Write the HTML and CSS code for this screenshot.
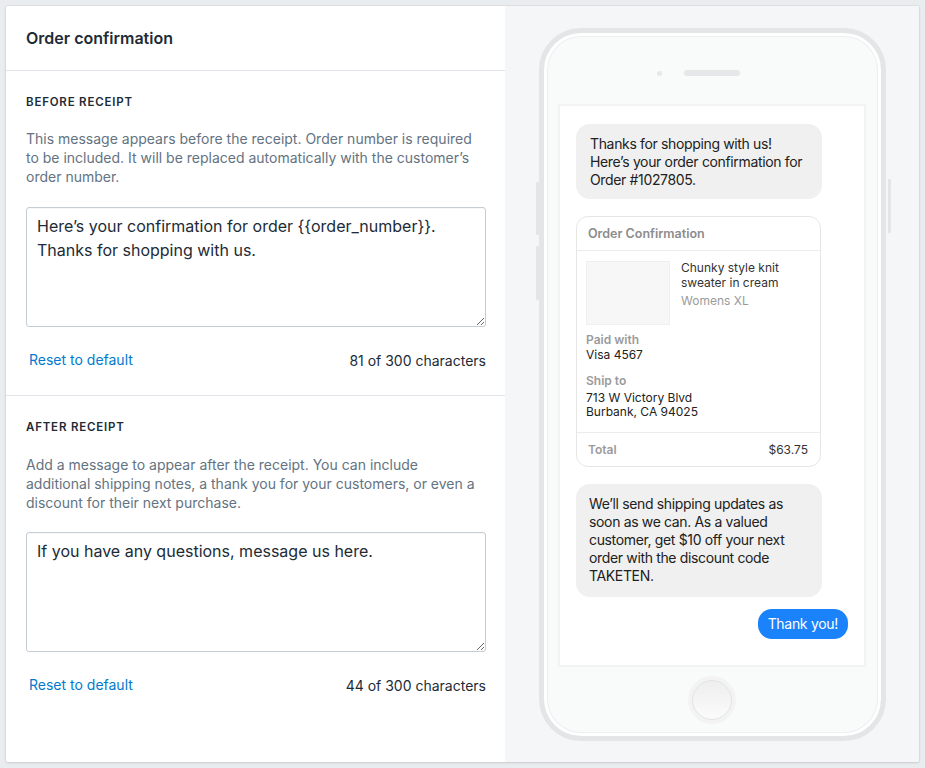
FILE: index.html
```html
<!DOCTYPE html>
<html lang="en">
<head>
<meta charset="utf-8">
<title>Order confirmation</title>
<link rel="stylesheet" href="styles.css">
</head>
<body>
<div class="card">
  <div class="editor">
    <div class="editor-header">
      <h1 class="title">Order confirmation</h1>
    </div>
    <section class="section">
      <h2 class="subheading">Before receipt</h2>
      <p class="help">This message appears before the receipt. Order number is required to be included. It will be replaced automatically with the customer’s order number.</p>
      <textarea class="field">Here’s your confirmation for order {{order_number}}. Thanks for shopping with us.</textarea>
      <div class="field-footer">
        <a class="link" href="#">Reset to default</a>
        <span class="count">81 of 300 characters</span>
      </div>
    </section>
    <section class="section section-border">
      <h2 class="subheading">After receipt</h2>
      <p class="help">Add a message to appear after the receipt. You can include additional shipping notes, a thank you for your customers, or even a discount for their next purchase.</p>
      <textarea class="field">If you have any questions, message us here.</textarea>
      <div class="field-footer">
        <a class="link" href="#">Reset to default</a>
        <span class="count">44 of 300 characters</span>
      </div>
    </section>
  </div>
  <div class="preview">
    <div class="phone">
      <span class="side side-l1"></span>
      <span class="side side-l2"></span>
      <span class="side side-r1"></span>
      <div class="phone-top">
        <span class="cam"></span>
        <span class="speaker"></span>
      </div>
      <div class="screen">
        <div class="bubble">Thanks for shopping with us!<br>Here’s your order confirmation for<br>Order #1027805.</div>
        <div class="receipt">
          <div class="receipt-head">Order Confirmation</div>
          <div class="receipt-body">
            <div class="item">
              <div class="thumb"></div>
              <div class="item-info">
                <div class="item-name">Chunky style knit<br>sweater in cream</div>
                <div class="item-variant">Womens XL</div>
              </div>
            </div>
            <div class="label label-first">Paid with</div>
            <div class="value">Visa 4567</div>
            <div class="label">Ship to</div>
            <div class="value value-addr">713 W Victory Blvd<br>Burbank, CA 94025</div>
          </div>
          <div class="receipt-foot">
            <span class="total-label">Total</span>
            <span class="total-value">$63.75</span>
          </div>
        </div>
        <div class="bubble bubble-second">We’ll send shipping updates as<br>soon as we can. As a valued<br>customer, get $10 off your next<br>order with the discount code<br>TAKETEN.</div>
        <div class="reply">Thank you!</div>
      </div>
      <div class="home">
        <span class="home-btn"></span>
      </div>
    </div>
  </div>
</div>
</body>
</html>
```

FILE: styles.css
```css
* { box-sizing: border-box; }

html, body {
  margin: 0;
  padding: 0;
}

body {
  background: #eaedf0;
  font-family: Inter, "Noto Sans", "Liberation Sans", sans-serif;
  color: #212b36;
  padding: 6px;
}

.card {
  display: flex;
  height: 756px;
  background: #fff;
  box-shadow: 0 0 0 1px rgba(63, 63, 68, 0.05), 0 1px 3px rgba(63, 63, 68, 0.15);
  border-radius: 2px;
  overflow: hidden;
}

.editor {
  width: 499px;
  flex: none;
  background: #fff;
}

.editor-header {
  padding: 22px 20px 22px;
  border-bottom: 1px solid #e1e4e8;
}

.title {
  margin: 0;
  font-size: 16px;
  line-height: 20px;
  font-weight: 600;
  color: #212b36;
}

.section {
  padding: 23px 19px 24px 20px;
}

.section-border {
  border-top: 1px solid #e1e4e8;
}

.subheading {
  margin: 0;
  font-size: 11.5px;
  line-height: 16px;
  font-weight: 600;
  text-transform: uppercase;
  letter-spacing: 0.8px;
  color: #212b36;
}

.help {
  margin: 19px 0 0;
  font-size: 14px;
  line-height: 19px;
  color: #637381;
}

.section-border .help {
  margin-top: 20px;
}

.field {
  display: block;
  width: 100%;
  height: 120px;
  margin-top: 21px;
  padding: 6px 10px;
  border: 1px solid #c4cdd5;
  border-radius: 3px;
  font-family: inherit;
  font-size: 16px;
  line-height: 24px;
  color: #212b36;
  background: #fff;
  box-shadow: inset 0 1px 0 0 rgba(99, 115, 129, 0.05);
  resize: vertical;
  outline: none;
}

.section-border .field {
  margin-top: 20px;
}

.field-footer {
  display: flex;
  justify-content: space-between;
  align-items: center;
  margin-top: 24px;
  padding-left: 3px;
  font-size: 14px;
  line-height: 20px;
}

.link {
  color: #007ace;
  text-decoration: none;
  margin-top: -2px;
}

.count {
  color: #212b36;
}

/* Preview */
.preview {
  flex: 1;
  background: #f4f6f8;
  padding-top: 22px;
}

.phone {
  position: relative;
  width: 347px;
  height: 713px;
  margin: 0 auto;
  border: 5px solid #e3e5e7;
  border-radius: 42px;
  background: #f9fafa;
  box-shadow: inset 0 0 0 3px #fff, inset 0 0 0 4px #eceeef;
  display: flex;
  flex-direction: column;
}

.side {
  position: absolute;
  width: 3px;
  background: #e3e5e7;
  border-radius: 1px;
}

.side-l1 { left: -8px; top: 149px; height: 53px; }
.side-l2 { left: -8px; top: 213px; height: 54px; }
.side-r1 { right: -10px; top: 146px; height: 54px; }

.phone-top {
  height: 71px;
  flex: none;
  display: grid;
  grid-template-columns: 1fr auto 1fr;
  align-items: start;
  padding-top: 37px;
}

.cam {
  grid-column: 1;
  justify-self: end;
  width: 5px;
  height: 5px;
  margin-right: 22px;
  margin-top: 0.5px;
  border-radius: 50%;
  background: #e5e7e9;
}

.speaker {
  grid-column: 2;
  width: 56px;
  height: 6px;
  border-radius: 3px;
  background: #e5e7e9;
}

.screen {
  width: 308px;
  height: 563px;
  flex: none;
  margin: 0 auto;
  background: #fff;
  border: 2px solid #f2f3f4;
  padding: 18px 16px;
  display: flex;
  flex-direction: column;
  align-items: flex-start;
  font-size: 14px;
  line-height: 18px;
  color: #212121;
}

.bubble {
  width: 246px;
  padding: 11px 14px 10px;
  background: #f0f0f0;
  border-radius: 14px;
  letter-spacing: -0.35px;
  white-space: nowrap;
}

.bubble-second {
  margin-top: 17px;
  padding: 11px 13px 12px;
}

.receipt {
  width: 245px;
  margin-top: 17px;
  border: 1px solid #e6e6e6;
  border-radius: 12px;
  font-size: 12px;
  line-height: 15px;
}

.receipt-head {
  height: 34px;
  line-height: 33px;
  padding: 0 11px;
  border-bottom: 1px solid #ececec;
  font-weight: 600;
  color: #8c8c8c;
  font-size: 12.5px;
}

.receipt-body {
  padding: 10px 9px 13px;
}

.item {
  display: flex;
  align-items: flex-start;
}

.thumb {
  width: 84px;
  height: 64px;
  flex: none;
  background: #f7f7f7;
  border: 1px solid #efefef;
}

.item-info {
  margin-left: 11px;
  margin-top: -1px;
}

.item-name {
  color: #333;
}

.item-variant {
  margin-top: 3px;
  color: #9b9b9b;
}

.label {
  margin-top: 11px;
  line-height: 16px;
  font-weight: 600;
  color: #9b9b9b;
}

.label-first {
  margin-top: 7px;
}

.value {
  line-height: 14px;
  color: #222;
}

.value-addr {
  margin-top: 2px;
}

.receipt-foot {
  display: flex;
  justify-content: space-between;
  align-items: center;
  height: 34px;
  padding: 0 12px 1px 11px;
  border-top: 1px solid #ececec;
}

.total-label {
  font-weight: 600;
  color: #9b9b9b;
}

.total-value {
  color: #333;
}

.reply {
  align-self: flex-end;
  margin-top: 12px;
  height: 30px;
  line-height: 30px;
  padding: 0 10px;
  border-radius: 14px;
  background: #1a82fb;
  color: #fff;
  font-size: 14px;
  letter-spacing: -0.3px;
}

.home {
  flex: 1;
  display: flex;
  align-items: center;
  justify-content: center;
  padding-bottom: 3px;
}

.home-btn {
  width: 40px;
  height: 40px;
  border-radius: 50%;
  border: 1px solid #e2e2e2;
  background: linear-gradient(#eeeeee, #fbfbfb);
  box-shadow: 0 0 0 4px #f3f3f3;
}
```
